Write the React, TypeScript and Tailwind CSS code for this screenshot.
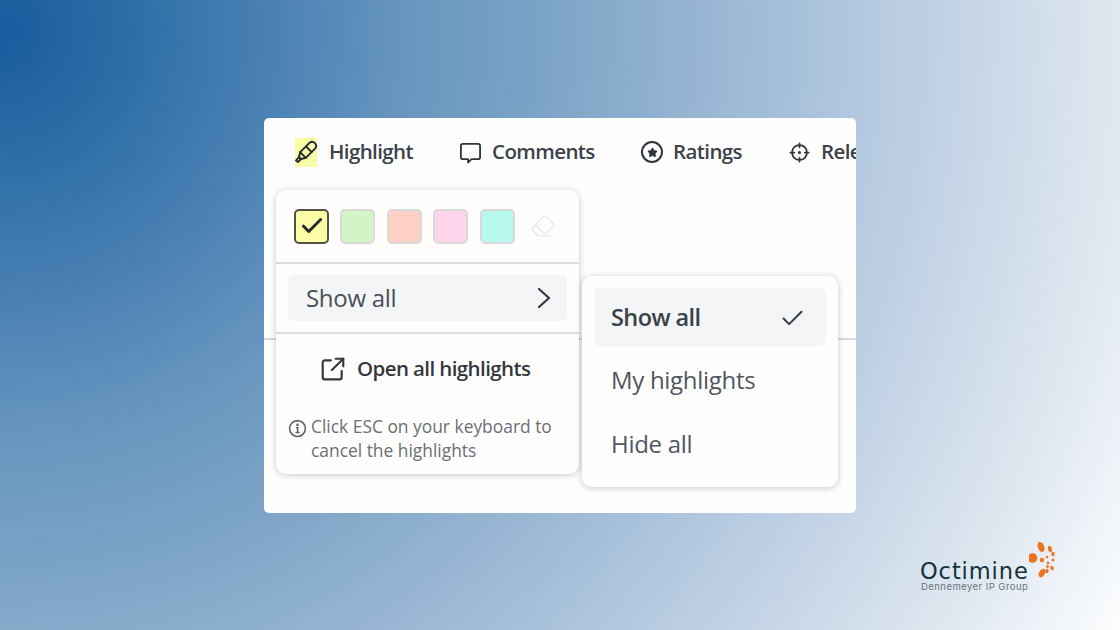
import { Check, Eraser, Star } from "lucide-react";

const swatches = ["bg-[#d3f5c5]", "bg-[#ffd0c6]", "bg-[#fed5ea]", "bg-[#b8f9ee]"];

function Tab({ icon, label, className }: { icon: React.ReactNode; label: string; className: string }) {
  return (
    <div className={`flex items-center shrink-0 ${className}`}>
      {icon}
      <span className="text-[20.5px] font-semibold tracking-[-0.6px] whitespace-nowrap text-[#3b4149] -mt-[2px]">{label}</span>
    </div>
  );
}

function HighlighterIcon() {
  return (
    <svg width="24" height="24" viewBox="0 0 24 24" fill="none" stroke="#23282e" strokeWidth="1.9" strokeLinejoin="round" strokeLinecap="round" className="shrink-0">
      <path d="M15.7 2.7A4 4 0 0 1 21.3 8.3L11.8 17.8 6.2 12.2z" />
      <path d="M12 6.4l5.6 5.6" />
      <path d="M6.2 12.2L5 17l2 2 4.8-1.2" />
      <path d="M5 17l-3 3.5L4 22l3-3" />
    </svg>
  );
}

function CommentIcon() {
  return (
    <svg width="23" height="23" viewBox="0 0 24 24" fill="none" stroke="#2f353c" strokeWidth="1.9" strokeLinejoin="round" className="shrink-0 -ml-[1px] mr-[10px]">
      <path d="M4 3h16a2 2 0 0 1 2 2v12a2 2 0 0 1-2 2h-7l-3.5 3.5V19H4a2 2 0 0 1-2-2V5a2 2 0 0 1 2-2z" />
    </svg>
  );
}

function TargetIcon() {
  return (
    <svg width="21" height="21" viewBox="0 0 24 24" fill="none" stroke="#2f353c" strokeWidth="2" strokeLinecap="round" className="shrink-0 -ml-[1px] mr-[11px]">
      <circle cx="12" cy="12" r="8.5" />
      <path d="M12 1.5V6M12 18v4.5M1.5 12H6M18 12h4.5" />
      <circle cx="12" cy="12" r="0.8" fill="#2f353c" />
    </svg>
  );
}

function OpenIcon() {
  return (
    <svg width="26" height="26" viewBox="0 0 24 24" fill="none" stroke="#33383f" strokeWidth="2" strokeLinecap="round" strokeLinejoin="round" className="shrink-0">
      <path d="M10 4H4.5a2 2 0 0 0-2 2v13.5a2 2 0 0 0 2 2H18a2 2 0 0 0 2-2V14" />
      <path d="M14.5 2.5h7v7" />
      <path d="M21.5 2.5L11 13" />
    </svg>
  );
}

function InfoIcon() {
  return (
    <svg width="19" height="19" viewBox="0 0 24 24" fill="none" stroke="#5e636a" strokeWidth="2" className="shrink-0 mt-[5px]">
      <circle cx="12" cy="12" r="10" />
      <path d="M10 11h2.2v6M9.5 17h5.2" />
      <circle cx="12" cy="7.5" r="0.7" fill="#5e636a" />
    </svg>
  );
}

function LogoDots() {
  const dots = [
    [3.5, 18, 4.8, 4.8, 0],
    [12, 7, 3.2, 5.2, -20],
    [21, 9, 2, 3.2, -10],
    [24, 14, 1.7, 2.2, 0],
    [13, 20, 2.2, 2.2, 0],
    [18, 17, 1.3, 1.3, 0],
    [24, 20, 1.5, 1.5, 0],
    [19, 23, 1.4, 1.4, 0],
    [18.5, 26.5, 1.5, 1.5, 0],
    [23, 28, 1.7, 2.4, -20],
    [18, 31, 1.6, 2.2, 20],
    [13, 33, 2.8, 4.6, 30],
  ];
  return (
    <svg width="30" height="40" viewBox="0 0 30 40" className="shrink-0 -ml-[2px]">
      {dots.map(([cx, cy, rx, ry, rot], i) => (
        <ellipse key={i} cx={cx} cy={cy} rx={rx} ry={ry} fill="#ee7420" transform={`rotate(${rot} ${cx} ${cy})`} />
      ))}
    </svg>
  );
}

export default function App() {
  return (
    <div
      className="w-[1120px] h-[630px] overflow-hidden flex flex-col items-center pt-[118px] font-['Open_Sans',sans-serif]"
      style={{
        background:
          "radial-gradient(circle 1270px at 0px 30px, #185c9e 0px, #2f6fa8 140px, #4c82b4 280px, #6a97c0 420px, #7ba3c5 540px, #a5bfda 785px, #bfd0e4 930px, #dfe8f0 1120px, #fcfdfe 1270px)",
      }}
    >
      <div className="relative w-[592px] h-[395px] bg-[#fffefe] rounded-[5px] overflow-hidden shrink-0">
        <div className="flex items-center h-[68px] pl-[31px]">
          <Tab
            className="w-[165px]"
            label="Highlight"
            icon={
              <span className="w-[22px] h-[29px] bg-[#f9fca6] flex items-center justify-center mr-[12px] shrink-0">
                <HighlighterIcon />
              </span>
            }
          />
          <Tab className="w-[181px]" label="Comments" icon={<CommentIcon />} />
          <Tab
            className="w-[149px]"
            label="Ratings"
            icon={
              <span className="w-[22px] h-[22px] rounded-full border-2 border-[#2f353c] flex items-center justify-center mr-[10px] shrink-0">
                <Star size={11} fill="#2f353c" className="text-[#2f353c]" />
              </span>
            }
          />
          <Tab className="" label="Relevance" icon={<TargetIcon />} />
        </div>

        {/* line behind the menus */}
        <div className="absolute left-0 right-0 top-[220px] h-[2px] bg-[#dadada]" />

        <div className="absolute left-[12px] top-[72px] w-[303px] h-[284px] bg-[#fffefd] rounded-[10px] shadow-[0_1px_7px_rgba(0,0,0,0.22)] flex flex-col">
          <div className="flex items-center h-[72px] pl-[18px] shrink-0">
            <span className="w-[35px] h-[35px] rounded-[5px] bg-[#fbfca5] border-2 border-[#50534a] flex items-center justify-center shrink-0 mr-[11px]">
              <Check size={26} strokeWidth={2.6} className="text-[#23282e]" />
            </span>
            {swatches.map((color) => (
              <span key={color} className={`w-[35px] h-[35px] mr-[11.5px] rounded-[5px] border-2 border-[#d9dad8] shrink-0 ${color}`} />
            ))}
            <Eraser size={26} strokeWidth={1.6} className="text-[#ececec] ml-[4px]" />
          </div>
          <div className="h-[72px] shrink-0 border-y-2 border-[#dcdcdc] px-[12px] flex items-center">
            <div className="w-full h-[46px] bg-[#f4f5f7] rounded-[5px] flex items-center justify-between pl-[18px] pr-[16px]">
              <span className="text-[24px] text-[#4a4f57] tracking-[-0.3px]">Show all</span>
              <svg width="14" height="22" viewBox="0 0 14 22" fill="none" stroke="#33383f" strokeWidth="2.2" strokeLinecap="round" strokeLinejoin="round">
                <path d="M2 2l10 9-10 9" />
              </svg>
            </div>
          </div>
          <div className="flex items-center h-[70px] shrink-0 pl-[44px] gap-[11px]">
            <OpenIcon />
            <span className="text-[20.5px] font-semibold tracking-[-0.6px] text-[#33383f] -mt-[2px]">Open all highlights</span>
          </div>
          <div className="flex items-start pl-[12px] gap-[4px] pt-[10px]">
            <InfoIcon />
            <p className="text-[17.4px] leading-[24px] text-[#6b6f76]">
              Click ESC on your keyboard to
              <br />
              cancel the highlights
            </p>
          </div>
        </div>

        <div className="absolute left-[318px] top-[158px] w-[256px] h-[211px] bg-[#fffefe] rounded-[10px] shadow-[0_1px_7px_rgba(0,0,0,0.22)] px-[12px] py-[12px] flex flex-col">
          <div className="h-[58px] rounded-[5px] bg-[#f4f5f7] flex items-center justify-between pl-[17px] pr-[20px] pt-[2px]">
            <span className="text-[23.5px] font-semibold tracking-[-0.6px] text-[#3b4149]">Show all</span>
            <Check size={27} strokeWidth={1.7} className="text-[#33383f]" />
          </div>
          <div className="h-[68px] flex items-center pl-[17px] text-[24px] tracking-[-0.3px] text-[#51565e]">My highlights</div>
          <div className="h-[60px] flex items-center pl-[17px] text-[24px] tracking-[-0.3px] text-[#51565e]">Hide all</div>
        </div>
      </div>

      <div className="self-end mr-[61px] mt-[27px] flex flex-col items-start">
        <div className="flex items-end h-[40px]">
          <span className="w-[111px] text-[22.5px] leading-[24px] tracking-[0.9px] whitespace-nowrap font-['DejaVu_Sans',sans-serif] text-[#14303d] -mb-[3px]">Octimine</span>
          <LogoDots />
        </div>
        <span className="text-[9.5px] leading-[12px] mt-[1px] text-[#667580] tracking-[0.45px] ml-[1px] font-['Inter',sans-serif]">Dennemeyer IP Group</span>
      </div>
    </div>
  );
}
